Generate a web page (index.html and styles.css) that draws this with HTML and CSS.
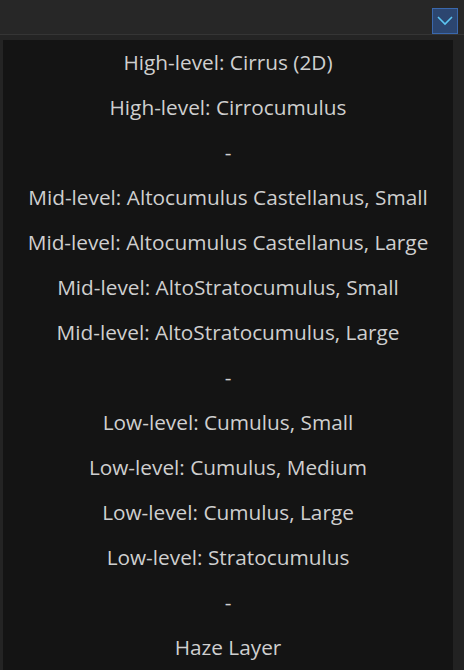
FILE: index.html
```html
<!DOCTYPE html>
<html lang="en">
<head>
  <meta charset="UTF-8">
  <meta name="viewport" content="width=device-width, initial-scale=1.0">
  <title>Cloud Layers</title>
  <link rel="stylesheet" href="styles.css">
</head>
<body>
  <div class="topbar">
    <button class="drop-btn" aria-label="Open list">
      <svg width="16" height="10" viewBox="0 0 16 10">
        <path d="M1 1 L8 8 L15 1" fill="none" stroke="#5cc6f2" stroke-width="1.6"/>
      </svg>
    </button>
  </div>

  <div class="frame">
    <ul class="options">
      <li>High-level: Cirrus (2D)</li>
      <li>High-level: Cirrocumulus</li>
      <li class="sep">-</li>
      <li>Mid-level: Altocumulus Castellanus, Small</li>
      <li>Mid-level: Altocumulus Castellanus, Large</li>
      <li>Mid-level: AltoStratocumulus, Small</li>
      <li>Mid-level: AltoStratocumulus, Large</li>
      <li class="sep">-</li>
      <li>Low-level: Cumulus, Small</li>
      <li>Low-level: Cumulus, Medium</li>
      <li>Low-level: Cumulus, Large</li>
      <li>Low-level: Stratocumulus</li>
      <li class="sep">-</li>
      <li>Haze Layer</li>
    </ul>
    <div class="side"></div>
  </div>
</body>
</html>
```

FILE: styles.css
```css
body {
  margin: 0;
  padding: 0;
  height: 670px;
  overflow: hidden;
  background-color: #242424;
  font-family: 'Open Sans', 'Noto Sans', sans-serif;
}

.topbar {
  height: 35px;
  background-color: #272727;
  border-bottom: 1px solid #353535;
  display: flex;
  justify-content: flex-end;
  align-items: flex-end;
  padding-right: 6px;
  box-sizing: border-box;
}

.drop-btn {
  width: 26px;
  height: 26px;
  margin-bottom: 0;
  padding: 0;
  background-color: #2c4670;
  border: 1px solid #3a68ad;
  display: flex;
  justify-content: center;
  align-items: center;
}

.frame {
  display: flex;
  padding-top: 5px;
  padding-left: 3px;
}

.options {
  list-style: none;
  margin: 0;
  padding: 0;
  width: 450px;
  background-color: #141414;
  color: #cfcfcf;
  font-size: 20.8px;
  text-align: center;
}

.options li {
  height: 45px;
  line-height: 45px;
}

.side {
  flex: 1;
  background-color: #222222;
}
```
